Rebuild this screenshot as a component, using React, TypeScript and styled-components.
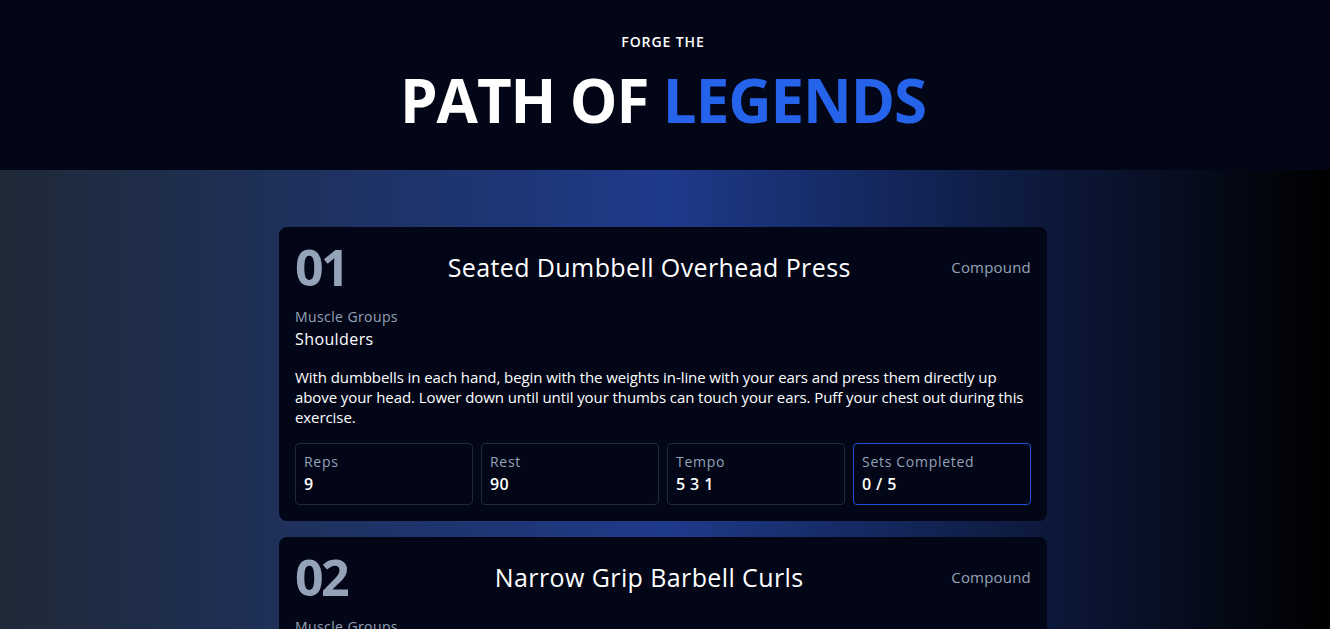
import React from "react";
import styled, { createGlobalStyle } from "styled-components";

const Global = createGlobalStyle`
  html, body { margin: 0; padding: 0; }
  body {
    font-family: "Open Sans", "Noto Sans", sans-serif;
    background: #020617;
    color: #fff;
  }
`;

const Page = styled.div`
  min-height: 100vh;
  display: flex;
  flex-direction: column;
  background: linear-gradient(to right, #1f2937 0%, #1e3a8a 50%, #000 100%);
`;

const Header = styled.header`
  background: #020617;
  display: flex;
  flex-direction: column;
  align-items: center;
  padding: 32px 4px 40px 0;
  height: 170px;
  box-sizing: border-box;
`;

const Kicker = styled.p`
  margin: 0;
  font-size: 14px;
  line-height: 20px;
  font-weight: 600;
  letter-spacing: 0.9px;
  text-transform: uppercase;
`;

const Title = styled.h1`
  margin: 18px 0 0;
  font-size: 60px;
  line-height: 60px;
  font-weight: 700;
  letter-spacing: -1.1px;
`;

const Accent = styled.span`
  color: #2563eb;
`;

const Main = styled.main`
  flex: 1;
  padding: 57px 4px 40px 0;
  display: flex;
  flex-direction: column;
  align-items: center;
  gap: 16px;
`;

const Card = styled.section`
  width: 768px;
  box-sizing: border-box;
  background: #020617;
  border-radius: 8px;
  padding: 16px;
  display: flex;
  flex-direction: column;
  gap: 16px;
`;

const TopRow = styled.div`
  display: flex;
  align-items: center;
  justify-content: space-between;
`;

const Num = styled.span`
  font-size: 50px;
  line-height: 48px;
  font-weight: 700;
  color: #94a3b8;
  letter-spacing: -2.5px;
`;

const ExName = styled.h2`
  margin: 0;
  font-size: 25px;
  line-height: 30px;
  font-weight: 400;
  letter-spacing: 0.4px;
`;

const Kind = styled.span`
  font-size: 15px;
  line-height: 20px;
  color: #94a3b8;
  letter-spacing: 0.2px;
`;

const Group = styled.div`
  display: flex;
  flex-direction: column;
`;

const Label = styled.span<{ $wide?: boolean }>`
  font-size: 14px;
  line-height: 20px;
  color: #94a3b8;
  letter-spacing: ${(p) => (p.$wide ? "0.7px" : "0.4px")};
`;

const Value = styled.span<{ $bold?: boolean }>`
  font-size: 16px;
  line-height: 24px;
  font-weight: ${(p) => (p.$bold ? 600 : 500)};
  letter-spacing: 0.4px;
  color: #fff;
`;

const Desc = styled.p`
  margin: 0;
  font-size: 15px;
  line-height: 20px;
  letter-spacing: -0.08px;
`;

const Stats = styled.div`
  display: grid;
  grid-template-columns: repeat(4, 1fr);
  gap: 8px;
`;

const Stat = styled.div<{ $active?: boolean }>`
  border: 1px solid ${(p) => (p.$active ? "#1d4ed8" : "#1e293b")};
  border-radius: 4px;
  padding: 8px;
  display: flex;
  flex-direction: column;
`;

const exercises = [
  {
    n: "01",
    name: "Seated Dumbbell Overhead Press",
    type: "Compound",
    muscles: "Shoulders",
    desc: "With dumbbells in each hand, begin with the weights in-line with your ears and press them directly up above your head. Lower down until until your thumbs can touch your ears. Puff your chest out during this exercise.",
    reps: "9",
    rest: "90",
    tempo: "5 3 1",
    sets: "0 / 5",
  },
  {
    n: "02",
    name: "Narrow Grip Barbell Curls",
    type: "Compound",
    muscles: "Biceps",
    desc: "Grip the barbell with your hands close together and curl the weight up towards your chest, keeping your elbows tucked in by your sides. Lower slowly under control.",
    reps: "12",
    rest: "60",
    tempo: "3 1 1",
    sets: "0 / 4",
  },
];

export default function App() {
  return (
    <Page>
      <Global />
      <Header>
        <Kicker>Forge the</Kicker>
        <Title>
          PATH OF <Accent>LEGENDS</Accent>
        </Title>
      </Header>
      <Main>
        {exercises.map((e) => (
          <Card key={e.n}>
            <TopRow>
              <Num>{e.n}</Num>
              <ExName>{e.name}</ExName>
              <Kind>{e.type}</Kind>
            </TopRow>
            <Group>
              <Label>Muscle Groups</Label>
              <Value>{e.muscles}</Value>
            </Group>
            <Desc>{e.desc}</Desc>
            <Stats>
              <Stat>
                <Label $wide>Reps</Label>
                <Value $bold>{e.reps}</Value>
              </Stat>
              <Stat>
                <Label $wide>Rest</Label>
                <Value $bold>{e.rest}</Value>
              </Stat>
              <Stat>
                <Label $wide>Tempo</Label>
                <Value $bold>{e.tempo}</Value>
              </Stat>
              <Stat $active>
                <Label $wide>Sets Completed</Label>
                <Value $bold>{e.sets}</Value>
              </Stat>
            </Stats>
          </Card>
        ))}
      </Main>
    </Page>
  );
}
